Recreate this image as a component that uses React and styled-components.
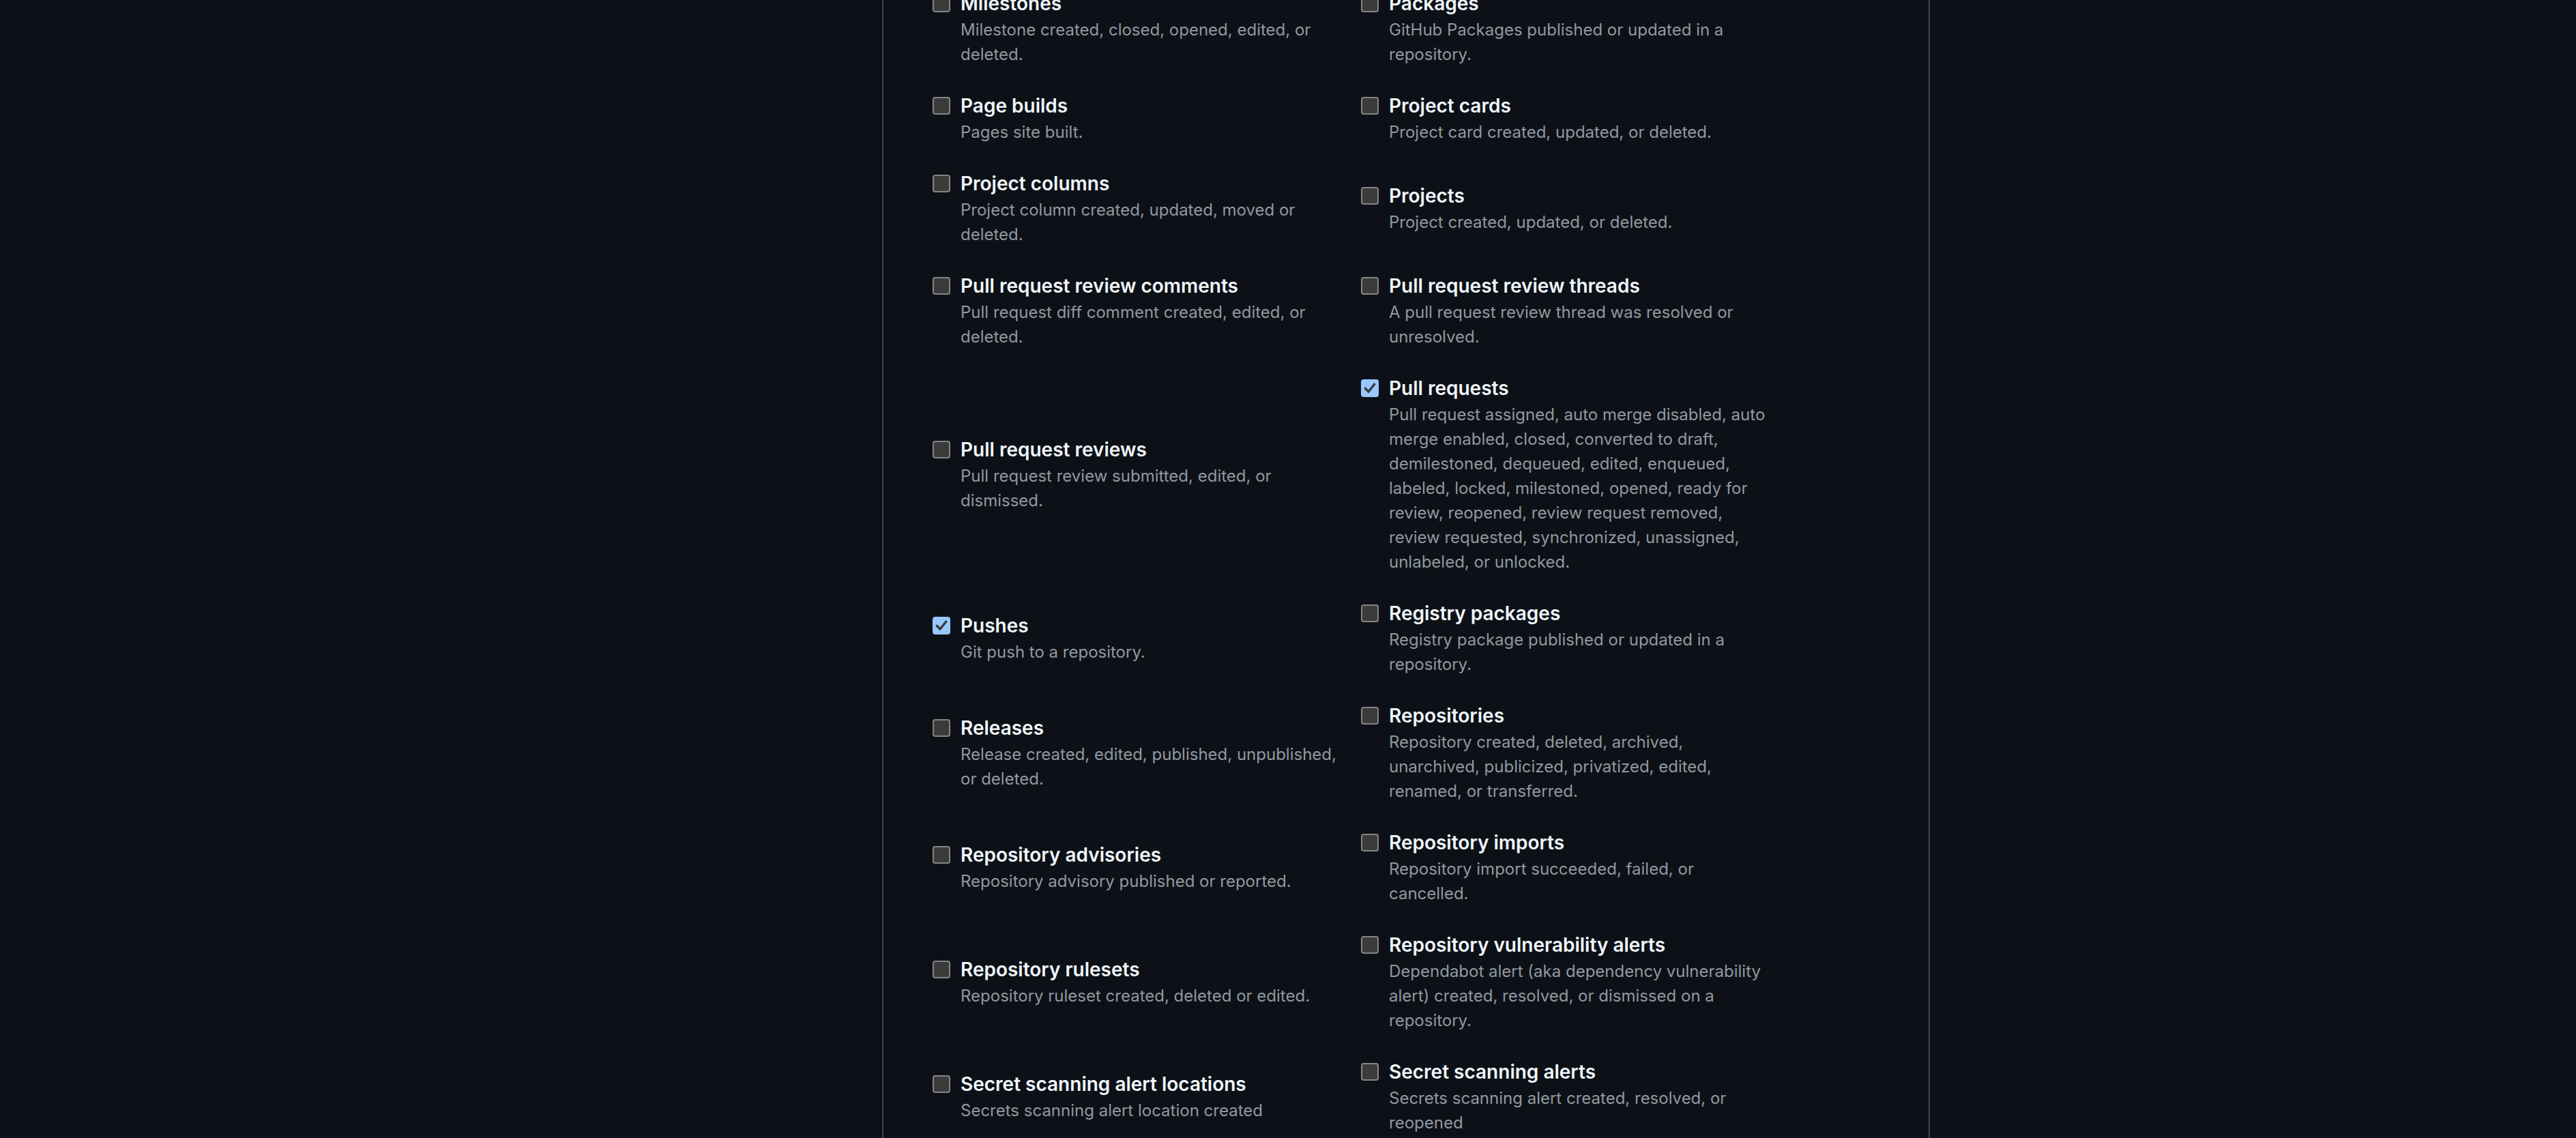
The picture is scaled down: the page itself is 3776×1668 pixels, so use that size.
import React from 'react'
import styled, {createGlobalStyle} from 'styled-components'

const GlobalStyle = createGlobalStyle`
  html, body {
    margin: 0;
    padding: 0;
    background: #0d1117;
  }
  body {
    font-family: Inter, "Noto Sans", "Liberation Sans", sans-serif;
    overflow: hidden;
  }
`

const Page = styled.main`
  display: grid;
  grid-template-columns: 1293px 1536px 1fr;
  height: 1668px;
  overflow: hidden;
`

const Panel = styled.section`
  grid-column: 2;
  border-left: 2px solid #3d444d;
  border-right: 2px solid #3d444d;
  padding-left: 72px;
`

// the list is scrolled a little, so the first row starts above the fold
const EventGrid = styled.div`
  display: grid;
  grid-template-columns: repeat(2, 628px);
  row-gap: 36px;
  align-items: center;
  margin-top: -16px;
`

const Event = styled.label`
  display: flex;
  align-items: flex-start;
  gap: 15px;
  cursor: pointer;
`

const Box = styled.span`
  flex: none;
  box-sizing: border-box;
  width: 26px;
  height: 26px;
  margin-top: 8px;
  border-radius: 4px;
  border: 2px solid ${p => (p.$checked ? '#99c8ff' : '#858585')};
  background: ${p => (p.$checked ? '#99c8ff' : '#3b3b3b')};
  display: flex;
  align-items: center;
  justify-content: center;
`

const Text = styled.div`
  width: 556px;
`

const Title = styled.div`
  font-size: 28px;
  line-height: 42px;
  font-weight: 600;
  color: #f0f6fc;
`

const Note = styled.div`
  font-size: 24px;
  line-height: 36px;
  color: #9198a1;
`

const events = [
  {name: 'Milestones', note: 'Milestone created, closed, opened, edited, or deleted.'},
  {name: 'Packages', note: 'GitHub Packages published or updated in a repository.'},
  {name: 'Page builds', note: 'Pages site built.'},
  {name: 'Project cards', note: 'Project card created, updated, or deleted.'},
  {name: 'Project columns', note: 'Project column created, updated, moved or deleted.'},
  {name: 'Projects', note: 'Project created, updated, or deleted.'},
  {name: 'Pull request review comments', note: 'Pull request diff comment created, edited, or deleted.'},
  {name: 'Pull request review threads', note: 'A pull request review thread was resolved or unresolved.'},
  {name: 'Pull request reviews', note: 'Pull request review submitted, edited, or dismissed.'},
  {
    name: 'Pull requests',
    checked: true,
    note: 'Pull request assigned, auto merge disabled, auto merge enabled, closed, converted to draft, demilestoned, dequeued, edited, enqueued, labeled, locked, milestoned, opened, ready for review, reopened, review request removed, review requested, synchronized, unassigned, unlabeled, or unlocked.',
  },
  {name: 'Pushes', checked: true, note: 'Git push to a repository.'},
  {name: 'Registry packages', note: 'Registry package published or updated in a repository.'},
  {name: 'Releases', note: 'Release created, edited, published, unpublished, or deleted.'},
  {name: 'Repositories', note: 'Repository created, deleted, archived, unarchived, publicized, privatized, edited, renamed, or transferred.'},
  {name: 'Repository advisories', note: 'Repository advisory published or reported.'},
  {name: 'Repository imports', note: 'Repository import succeeded, failed, or cancelled.'},
  {name: 'Repository rulesets', note: 'Repository ruleset created, deleted or edited.'},
  {name: 'Repository vulnerability alerts', note: 'Dependabot alert (aka dependency vulnerability alert) created, resolved, or dismissed on a repository.'},
  {name: 'Secret scanning alert locations', note: 'Secrets scanning alert location created'},
  {name: 'Secret scanning alerts', note: 'Secrets scanning alert created, resolved, or reopened'},
]

const Check = () => (
  <svg width="20" height="20" viewBox="0 0 20 20">
    <path d="M3.5 10.5 L8 15 L16.5 4.5" fill="none" stroke="#3b3b3b" strokeWidth="3.4" strokeLinecap="square" strokeLinejoin="miter" />
  </svg>
)

const App = () => (
  <>
    <GlobalStyle />
    <Page>
      <Panel>
        <EventGrid>
          {events.map(ev => (
            <Event key={ev.name}>
              <Box $checked={ev.checked}>{ev.checked && <Check />}</Box>
              <Text>
                <Title>{ev.name}</Title>
                <Note>{ev.note}</Note>
              </Text>
            </Event>
          ))}
        </EventGrid>
      </Panel>
    </Page>
  </>
)

export default App
